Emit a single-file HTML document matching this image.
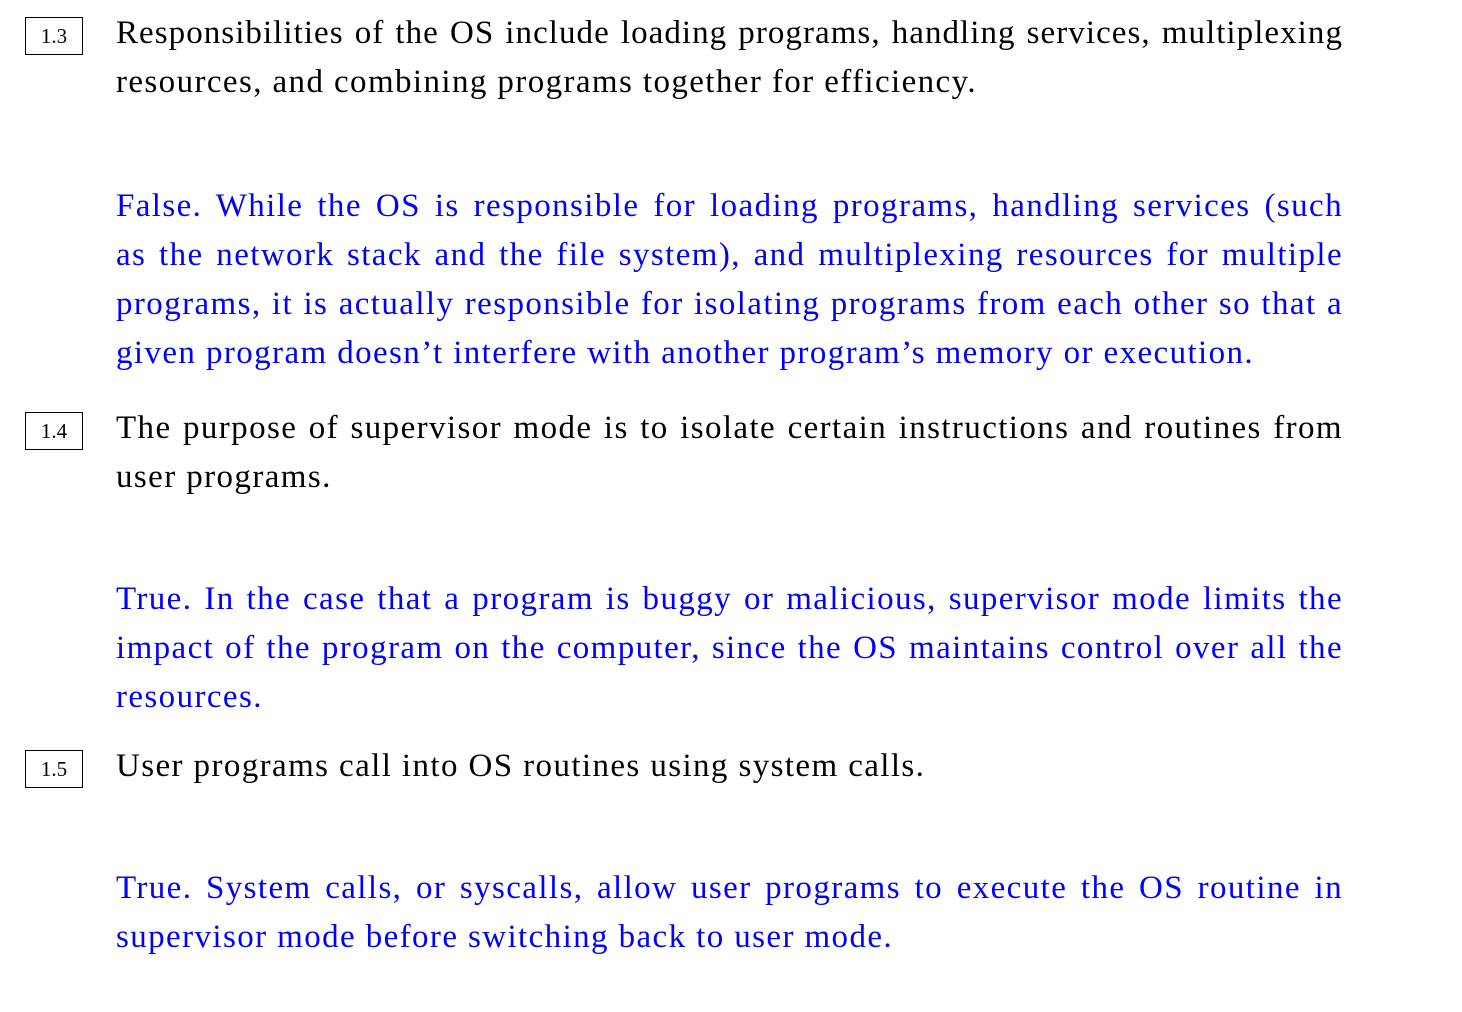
<!DOCTYPE html>
<html><head><meta charset="utf-8"><style>
html,body{margin:0;padding:0;background:#fff;width:1462px;height:1012px;overflow:hidden}
.p{position:absolute;left:116px;width:1227px;font-family:"Liberation Serif",serif;font-size:33px;letter-spacing:1.4px;line-height:49px;color:#000}
.p div{text-align:justify;text-align-last:justify;white-space:nowrap}
.p div.l{text-align-last:left}
.b{color:#0000ff}
.box{position:absolute;left:25px;width:56px;height:36px;border:1px solid #000;font-family:"Liberation Serif",serif;font-size:21px;line-height:36px;text-align:center;color:#000}
</style></head><body>
<div class="box" style="top:17px">1.3</div>
<div class="p" style="top:9px"><div style="letter-spacing:1.05px">Responsibilities of the OS include loading programs, handling services, multiplexing</div><div class="l">resources, and combining programs together for efficiency.</div></div>
<div class="p b" style="top:182px"><div>False. While the OS is responsible for loading programs, handling services (such</div><div>as the network stack and the file system), and multiplexing resources for multiple</div><div>programs, it is actually responsible for isolating programs from each other so that a</div><div class="l">given program doesn’t interfere with another program’s memory or execution.</div></div>
<div class="box" style="top:412px">1.4</div>
<div class="p" style="top:404px"><div>The purpose of supervisor mode is to isolate certain instructions and routines from</div><div class="l">user programs.</div></div>
<div class="p b" style="top:575px"><div>True. In the case that a program is buggy or malicious, supervisor mode limits the</div><div>impact of the program on the computer, since the OS maintains control over all the</div><div class="l">resources.</div></div>
<div class="box" style="top:750px">1.5</div>
<div class="p" style="top:742px"><div class="l">User programs call into OS routines using system calls.</div></div>
<div class="p b" style="top:864px"><div>True. System calls, or syscalls, allow user programs to execute the OS routine in</div><div class="l">supervisor mode before switching back to user mode.</div></div>
</body></html>
